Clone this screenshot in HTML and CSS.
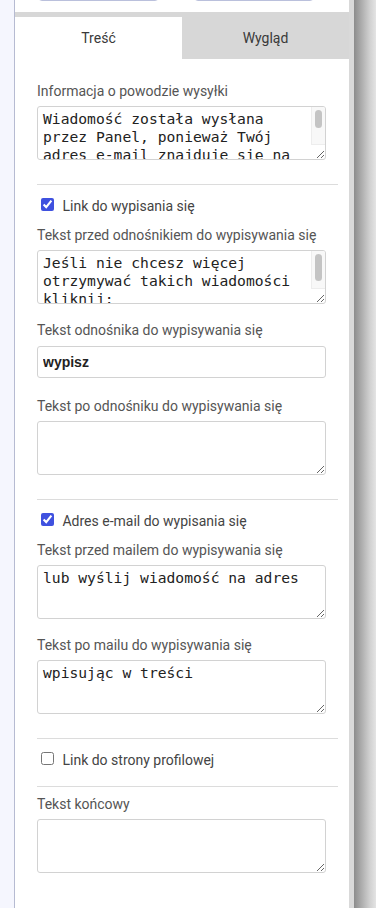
FILE: index.html
```html
<!DOCTYPE html>
<html lang="pl">
<head>
    <meta charset="UTF-8">
    <meta name="viewport" content="width=device-width, initial-scale=1.0">
    <title>Ustawienia stopki</title>
    <link rel="stylesheet" href="styles.css">
</head>
<body>
    <div class="page">
        <div class="side"></div>
        <div class="panel">
            <div class="actions">
                <button class="btn"></button>
                <button class="btn"></button>
            </div>
            <div class="tabs">
                <div class="tab active">Treść</div>
                <div class="tab">Wygląd</div>
            </div>
            <form class="form">
                <label class="lbl" for="reason">Informacja o powodzie wysyłki</label>
                <div class="scroll-wrap">
                    <textarea id="reason" class="area scrolled">Wiadomość została wysłana przez Panel, ponieważ Twój adres e-mail znajduje się na liście odbiorców newslettera.</textarea>
                    <span class="scrollbar"><span class="thumb thumb-small"></span></span>
                </div>

                <hr class="sep">

                <label class="check"><input type="checkbox" checked> Link do wypisania się</label>

                <label class="lbl" for="beforeLink">Tekst przed odnośnikiem do wypisywania się</label>
                <div class="scroll-wrap">
                    <textarea id="beforeLink" class="area scrolled">Jeśli nie chcesz więcej otrzymywać takich wiadomości kliknij:</textarea>
                    <span class="scrollbar"><span class="thumb thumb-big"></span></span>
                </div>

                <label class="lbl next" for="linkText">Tekst odnośnika do wypisywania się</label>
                <input type="text" id="linkText" class="text" value="wypisz">

                <label class="lbl next" for="afterLink">Tekst po odnośniku do wypisywania się</label>
                <textarea id="afterLink" class="area"></textarea>

                <hr class="sep">

                <label class="check"><input type="checkbox" checked> Adres e-mail do wypisania się</label>

                <label class="lbl" for="beforeMail">Tekst przed mailem do wypisywania się</label>
                <textarea id="beforeMail" class="area">lub wyślij wiadomość na adres</textarea>

                <label class="lbl next" for="afterMail">Tekst po mailu do wypisywania się</label>
                <textarea id="afterMail" class="area">wpisując w treści</textarea>

                <hr class="sep">

                <label class="check"><input type="checkbox"> Link do strony profilowej</label>

                <hr class="sep sep-tight">

                <label class="lbl" for="footer">Tekst końcowy</label>
                <textarea id="footer" class="area"></textarea>
            </form>
        </div>
        <div class="gutter"></div>
        <div class="shadow"></div>
    </div>
</body>
</html>
```

FILE: styles.css
```css
body {
    margin: 0;
    font-family: Roboto, "Liberation Sans", sans-serif;
    height: 908px;
    overflow: hidden;
}
.page {
    display: flex;
    height: 908px;
}
.side {
    width: 14px;
    background-color: #f5f6fe;
    border-right: 1px solid #b6bbd2;
}
.panel {
    width: 334px;
    background-color: #fff;
    overflow: hidden;
}
.gutter {
    width: 5px;
    background-color: #d9d9d9;
}
.shadow {
    flex: 1;
    background: linear-gradient(to right, #8c8c8c, #a9a9a9 30%, #cfcfcf 70%, #e4e4e4);
}

/* przyciski nad zakładkami (widać tylko ich dół) */
.actions {
    display: flex;
    height: 12px;
    padding-left: 23px;
}
.btn {
    width: 127px;
    height: 31px;
    margin-top: -30px;
    margin-right: 35px;
    background-color: #fff;
    border: 1px solid #bac0dc;
    border-radius: 4px;
}

.tabs {
    display: flex;
    background-color: #d7d7d7;
    padding-top: 5px;
}
.tab {
    flex: 1;
    height: 42px;
    line-height: 42px;
    text-align: center;
    font-size: 14px;
    color: #3a3a3a;
}
.tab.active {
    background-color: #fff;
}

.form {
    display: flex;
    flex-direction: column;
    align-items: flex-start;
    padding: 22px 11px 40px 22px;
}
.lbl {
    display: block;
    line-height: 20px;
    font-size: 14px;
    color: #555;
    margin-bottom: 5px;
}
.lbl.next {
    margin-top: 16px;
}
.area,
.text {
    width: 289px;
    box-sizing: border-box;
    border: 1px solid #d2d2d2;
    border-radius: 3px;
    margin: 0;
}
.area {
    display: block;
    height: 54px;
    padding: 3px 5px;
    font-family: "DejaVu Sans Mono", monospace;
    font-size: 11pt;
    line-height: 18px;
    color: #222;
}
.area.scrolled {
    padding-right: 20px;
    overflow: hidden;
}

/* pasek przewijania pola tekstowego */
.scroll-wrap {
    position: relative;
}
.scrollbar {
    position: absolute;
    top: 1px;
    right: 1px;
    bottom: 15px;
    width: 14px;
    background-color: #f8f8f8;
    border-left: 1px solid #ededed;
    border-bottom: 1px solid #ededed;
    border-top-right-radius: 2px;
    box-sizing: border-box;
}
.thumb {
    position: absolute;
    left: 3px;
    right: 3px;
    top: 3px;
    background-color: #c4c4c4;
    border-radius: 4px;
}
.thumb-small {
    height: 18px;
}
.thumb-big {
    height: 27px;
}

.text {
    height: 32px;
    margin: 1px 0 2px;
    padding: 0 5px;
    font-family: "Liberation Sans", Arial, sans-serif;
    font-size: 14px;
    font-weight: bold;
    color: #222;
}
.sep {
    align-self: stretch;
    border: none;
    border-top: 1px solid #dcdcdc;
    margin: 24px 0 10px;
}
.sep-tight {
    margin: 7px 0 7px;
}
.check {
    display: block;
    line-height: 20px;
    font-size: 14px;
    color: #444;
    margin-bottom: 9px;
}
.check input {
    accent-color: #3f51df;
    margin: 3px 5px 3px 4px;
}
```
